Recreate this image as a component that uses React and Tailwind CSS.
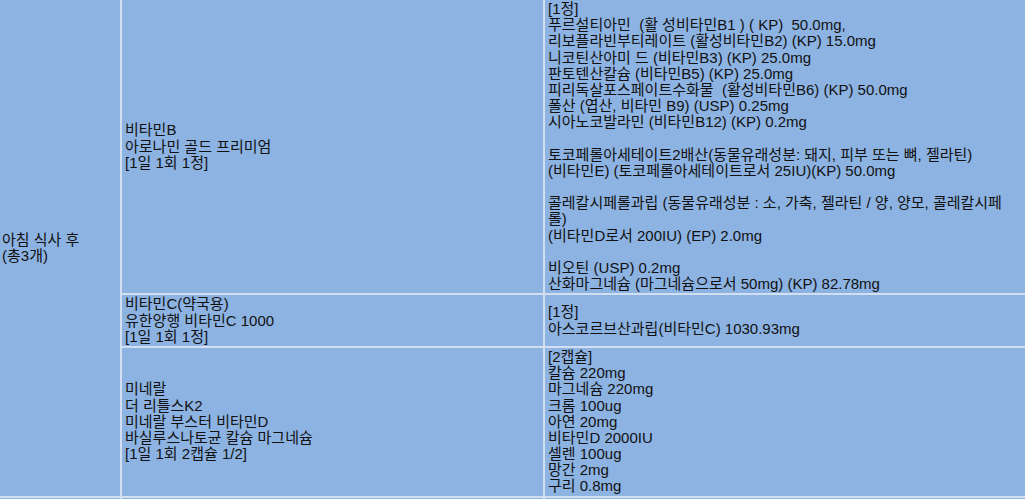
const rows = [
  {
    product: ['비타민B', '아로나민 골드 프리미엄', '[1일 1회 1정]'],
    contents: [
      '[1정]',
      '푸르설티아민  (활 성비타민B1 ) ( KP)  50.0mg,',
      '리보플라빈부티레이트 (활성비타민B2) (KP) 15.0mg',
      '니코틴산아미 드 (비타민B3) (KP) 25.0mg',
      '판토텐산칼슘 (비타민B5) (KP) 25.0mg',
      '피리독살포스페이트수화물  (활성비타민B6) (KP) 50.0mg',
      '폴산 (엽산, 비타민 B9) (USP) 0.25mg',
      '시아노코발라민 (비타민B12) (KP) 0.2mg',
      '',
      '토코페롤아세테이트2배산(동물유래성분: 돼지, 피부 또는 뼈, 젤라틴)',
      '(비타민E) (토코페롤아세테이트로서 25IU)(KP) 50.0mg',
      '',
      '콜레칼시페롤과립 (동물유래성분 : 소, 가축, 젤라틴 / 양, 양모, 콜레칼시페',
      '롤)',
      '(비타민D로서 200IU) (EP) 2.0mg',
      '',
      '비오틴 (USP) 0.2mg',
      '산화마그네슘 (마그네슘으로서 50mg) (KP) 82.78mg',
    ],
  },
  {
    product: ['비타민C(약국용)', '유한양행 비타민C 1000', '[1일 1회 1정]'],
    contents: ['[1정]', '아스코르브산과립(비타민C) 1030.93mg'],
  },
  {
    product: ['미네랄', '더 리틀스K2', '미네랄 부스터 비타민D', '바실루스나토균 칼슘 마그네슘', '[1일 1회 2캡슐 1/2]'],
    contents: [
      '[2캡슐]',
      '칼슘 220mg',
      '마그네슘 220mg',
      '크롬 100ug',
      '아연 20mg',
      '비타민D 2000IU',
      '셀렌 100ug',
      '망간 2mg',
      '구리 0.8mg',
    ],
  },
]

function Lines({ lines }) {
  return (
    <div>
      {lines.map((l, i) => (
        <div key={i} className="whitespace-pre h-[16.2px]">{l}</div>
      ))}
    </div>
  )
}

export default function App() {
  return (
    <div className="h-[499px] w-[1025px] overflow-hidden bg-[#d2dff1] font-['Liberation_Sans','Noto_Sans_CJK_KR',sans-serif] text-[15px] leading-[16.2px] text-[#111]">
      <div className="grid grid-cols-[120px_421px_1fr] gap-[2px]">
        <div className="row-span-3 bg-[#8db3e2] px-[2px] flex items-center">
          <Lines lines={['아침 식사 후', '(총3개)']} />
        </div>
        {rows.map((r, i) => (
          <div key={i} className="contents">
            <div className="bg-[#8db3e2] px-[3px] py-px flex items-center">
              <Lines lines={r.product} />
            </div>
            <div className="bg-[#8db3e2] px-[3px] py-px flex items-center">
              <Lines lines={r.contents} />
            </div>
          </div>
        ))}
        <div className="bg-[#8db3e2] h-[40px]" />
        <div className="bg-[#8db3e2] h-[40px]" />
        <div className="bg-[#8db3e2] h-[40px]" />
      </div>
    </div>
  )
}
